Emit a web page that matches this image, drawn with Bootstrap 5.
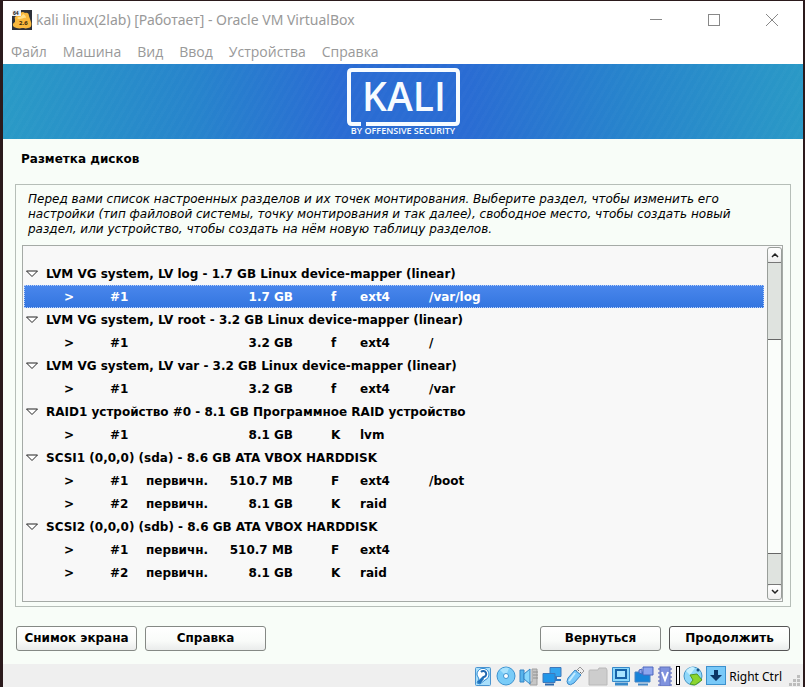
<!DOCTYPE html>
<html lang="ru">
<head>
<meta charset="utf-8">
<meta name="viewport" content="width=device-width, initial-scale=1">
<title>kali linux(2lab) [Работает] - Oracle VM VirtualBox</title>
<link href="https://cdn.jsdelivr.net/npm/bootstrap@5.3.0/dist/css/bootstrap.min.css" rel="stylesheet">
<style>
body { background: #2b1a1c; font-family: "DejaVu Sans", sans-serif; font-size: 12px; color: #000; padding: 1px 2px 0 3px; }
.vm-window { background: #f8fdf8; min-height: calc(100vh - 1px); }
.vm-chrome { background: #fff; color: #999; font-family: "Open Sans", "Noto Sans", sans-serif; }
.vm-title { height: 38px; padding: 0 2px 0 9px; }
.vm-title h1 { font-family: "Noto Sans", sans-serif; font-size: 14px; font-weight: 400; line-height: 20px; }
.win-btn { width: 58px; height: 36px; border: 0; background: none; padding: 0; }
.vm-menu { height: 25px; padding-left: 8px; gap: 16px; font-size: 14px; line-height: 26px; }
.vm-menu a { color: #999; text-decoration: none; }
.kali-banner { height: 75px; background: repeating-linear-gradient(120deg, rgba(255,255,255,.015) 0 3px, transparent 3px 7px), linear-gradient(90deg, #2a9ac6 0%, #2784cc 24%, #2a6cd3 42%, #2a6cd3 58%, #2784cc 78%, #2a99c6 100%); }
.installer { padding: 12px 12px 13px; }
.installer h2 { font-size: 12px; font-weight: 700; line-height: 16px; margin: 0 0 17px 6px; }
.question-frame { border: 1px solid #b6beb8; padding: 7px 7px 4px 6px; }
.question-frame p { font-style: italic; line-height: 15px; margin: 0 6px 8px; max-width: 720px; }
.tree-box { border: 1px solid #a5aaa6; background: #f8f8f8; height: 357px; }
.tree-view { padding: 16px 3px 0 1px; }
.part-tree { width: 100%; table-layout: fixed; font-weight: 700; border-collapse: collapse; }
.part-tree td, .part-tree th { height: 23px; padding: 0; line-height: 22px; white-space: nowrap; }
.part-tree svg { margin: 0 8px 0 2px; }
.part-tree .go { padding-left: 40px; }
.part-tree .flag { padding-left: 38px; }
.c-go { width: 86px; } .c-num { width: 36px; } .c-kind { width: 76px; } .c-size { width: 71px; } .c-flag { width: 67px; } .c-fs { width: 69px; }
.part-tree .picked { color: #fff; background: linear-gradient(#4a87ec, #3375e0); outline: 1px dotted #b9d0f8; outline-offset: -1px; }
.tree-scroll { width: 15px; background: #dfe3df; border: 1px solid #999e9a; margin: 1px 0; border-radius: 3px; }
.tree-scroll button { height: 14px; border: 0; padding: 0; background: linear-gradient(#fff, #eee); line-height: 1; display: flex; align-items: center; justify-content: center; border-radius: 3px; }
.track-up { height: 77px; border-top: 1px solid #777; }
.thumb { flex: 1; background: #fafdfa; border: 1px solid #666; border-width: 1px 0; }
.track-down { height: 31px; border-bottom: 1px solid #777; }
.actions { margin: 19px 1px 0; }
.gtk-btn { width: 121px; height: 25px; border: 1px solid #858985; border-radius: 3px; background: linear-gradient(#fff, #f9fbf9 60%, #eaeceb); font-size: 12px; font-weight: 700; line-height: 23px; padding: 0; color: #000; }
.gtk-btn.main { border-color: #555; }
.vm-status { background: #efefef; min-height: 23px; padding: 2px 2px 0 0; gap: 3px; font: 12px/22px "Noto Sans", sans-serif; overflow: hidden; }
.vm-status svg { flex: none; }
</style>
<script src="https://cdn.jsdelivr.net/npm/bootstrap@5.3.0/dist/js/bootstrap.bundle.min.js"></script>
</head>
<body>
<div class="vm-window d-flex flex-column">
<header class="vm-chrome">
  <div class="vm-title d-flex align-items-center">
    <svg width="20" height="20" viewBox="0 0 20 20" aria-hidden="true"><rect width="20" height="20" fill="#2d3038"/><path d="M3 9C2 8 3 6 5 6l3-1c0-3 3-4 5-2 2-1 4 0 4 3l2 6c1 3 0 6-3 6-2 1-5 0-6 0-3 1-6 0-8-1-2-2-1-4 1-5z" fill="#f9b83c"/><path d="M5 8c2-2 4 0 6-4 2 1 3 2 3 4-3-1-6 3-9 0z" fill="#ffe08a"/><rect width="9" height="6" fill="#eef1f5"/><text x="1" y="5" font-size="5" font-weight="700" fill="#222">64</text><text x="7" y="15" font-size="6" font-weight="700" fill="#33240a">2.6</text></svg>
    <h1 class="mb-0 ms-1 flex-grow-1 text-nowrap">kali linux(2lab) [Работает] - Oracle VM VirtualBox</h1>
    <button class="win-btn" aria-label="Свернуть"><svg width="12" height="14"><path d="M0 5.500h12" stroke="#888"/></svg></button>
    <button class="win-btn" aria-label="Развернуть"><svg width="12" height="14"><rect x=".5" y=".5" width="11" height="11" fill="none" stroke="#888"/></svg></button>
    <button class="win-btn" aria-label="Закрыть"><svg width="12" height="14"><path d="M0 0l12 12M12 0L0 12" stroke="#888"/></svg></button>
  </div>
  <nav class="vm-menu d-flex" aria-label="Меню">
    <a href="#">Файл</a><a href="#">Машина</a><a href="#">Вид</a><a href="#">Ввод</a><a href="#">Устройства</a><a href="#">Справка</a>
  </nav>
</header>
<div class="kali-banner d-flex justify-content-center">
  <svg width="118" height="75" viewBox="0 0 118 75" role="img" aria-label="KALI by Offensive Security" fill="#f6fbff" font-family="Open Sans, sans-serif"><path d="M17 60H8q-3 0-3-3V9q0-3 3-3h103q3 0 3 3v48q0 3-3 3H22" fill="none" stroke="#f6fbff" stroke-width="4"/><text x="60" y="47" font-size="39" font-weight="600" text-anchor="middle">KALI</text><text x="59" y="70" font-size="9" font-weight="600" text-anchor="middle">BY OFFENSIVE SECURITY</text></svg>
</div>
<main class="installer flex-grow-1">
  <h2>Разметка дисков</h2>
  <section class="question-frame">
    <p>Перед вами список настроенных разделов и их точек монтирования. Выберите раздел, чтобы изменить его настройки (тип файловой системы, точку монтирования и так далее), свободное место, чтобы создать новый раздел, или устройство, чтобы создать на нём новую таблицу разделов.</p>
    <div class="tree-box d-flex">
      <div class="tree-view flex-grow-1">
        <table class="part-tree">
          <colgroup><col class="c-go"><col class="c-num"><col class="c-kind"><col class="c-size"><col class="c-flag"><col class="c-fs"><col></colgroup>
          <tbody>
          <tr><th colspan="7"><svg width="12" height="8"><path d="M.5 1h11L6 6.500z" fill="#fff" stroke="#222"/></svg>LVM VG system, LV log - 1.7 GB Linux device-mapper (linear)</th></tr>
          <tr class="picked"><td class="go">&gt;</td><td>#1</td><td></td><td class="text-end">1.7 GB</td><td class="flag">f</td><td>ext4</td><td>/var/log</td></tr>
          <tr><th colspan="7"><svg width="12" height="8"><path d="M.5 1h11L6 6.500z" fill="#fff" stroke="#222"/></svg>LVM VG system, LV root - 3.2 GB Linux device-mapper (linear)</th></tr>
          <tr><td class="go">&gt;</td><td>#1</td><td></td><td class="text-end">3.2 GB</td><td class="flag">f</td><td>ext4</td><td>/</td></tr>
          <tr><th colspan="7"><svg width="12" height="8"><path d="M.5 1h11L6 6.500z" fill="#fff" stroke="#222"/></svg>LVM VG system, LV var - 3.2 GB Linux device-mapper (linear)</th></tr>
          <tr><td class="go">&gt;</td><td>#1</td><td></td><td class="text-end">3.2 GB</td><td class="flag">f</td><td>ext4</td><td>/var</td></tr>
          <tr><th colspan="7"><svg width="12" height="8"><path d="M.5 1h11L6 6.500z" fill="#fff" stroke="#222"/></svg>RAID1 устройство #0 - 8.1 GB Программное RAID устройство</th></tr>
          <tr><td class="go">&gt;</td><td>#1</td><td></td><td class="text-end">8.1 GB</td><td class="flag">K</td><td>lvm</td><td></td></tr>
          <tr><th colspan="7"><svg width="12" height="8"><path d="M.5 1h11L6 6.500z" fill="#fff" stroke="#222"/></svg>SCSI1 (0,0,0) (sda) - 8.6 GB ATA VBOX HARDDISK</th></tr>
          <tr><td class="go">&gt;</td><td>#1</td><td>первичн.</td><td class="text-end">510.7 MB</td><td class="flag">F</td><td>ext4</td><td>/boot</td></tr>
          <tr><td class="go">&gt;</td><td>#2</td><td>первичн.</td><td class="text-end">8.1 GB</td><td class="flag">K</td><td>raid</td><td></td></tr>
          <tr><th colspan="7"><svg width="12" height="8"><path d="M.5 1h11L6 6.500z" fill="#fff" stroke="#222"/></svg>SCSI2 (0,0,0) (sdb) - 8.6 GB ATA VBOX HARDDISK</th></tr>
          <tr><td class="go">&gt;</td><td>#1</td><td>первичн.</td><td class="text-end">510.7 MB</td><td class="flag">F</td><td>ext4</td><td></td></tr>
          <tr><td class="go">&gt;</td><td>#2</td><td>первичн.</td><td class="text-end">8.1 GB</td><td class="flag">K</td><td>raid</td><td></td></tr>
          </tbody>
        </table>
      </div>
      <div class="tree-scroll d-flex flex-column flex-shrink-0">
        <button aria-label="Вверх"><svg width="8" height="6"><path d="M1 5l3-3 3 3" fill="none" stroke="#222" stroke-width="1.500"/></svg></button>
        <div class="track-up"></div><div class="thumb"></div><div class="track-down"></div>
        <button aria-label="Вниз"><svg width="8" height="6"><path d="M1 1l3 3 3-3" fill="none" stroke="#222" stroke-width="1.500"/></svg></button>
      </div>
    </div>
  </section>
  <div class="actions d-flex gap-2">
    <button class="gtk-btn">Снимок экрана</button>
    <button class="gtk-btn me-auto">Справка</button>
    <button class="gtk-btn">Вернуться</button>
    <button class="gtk-btn main">Продолжить</button>
  </div>
</main>
<footer class="vm-status d-flex justify-content-end">
  <svg width="20" height="20"><rect x="2.500" y="1.500" width="15" height="18" rx="1" fill="#a9dffb" stroke="#4b94cf"/><path d="M4 9a6 6 0 1 1 8 5l-5 4-3-1 2-4z" fill="#fff" stroke="#2f8bd4"/><path d="M10 10l-6 6 3 2 4-5z" fill="#1e70bb"/><path d="M8 6a3 3 0 1 1 2 5" fill="none" stroke="#2368b0" stroke-width="2"/></svg>
  <svg width="20" height="20"><circle cx="10" cy="10" r="9" fill="#79ccf8" stroke="#3d93cf"/><path d="M4 4a9 9 0 0 1 9-2l-3 8z" fill="#a8e2fd"/><circle cx="10" cy="10" r="2.500" fill="#fff" stroke="#3d93cf"/></svg>
  <svg width="20" height="20"><path d="M13 3h5v16h-7v-3h2z" fill="#c6c6c6" stroke="#a0a0a0"/><path d="M14 6h5M14 9h5M14 12h5" stroke="#909090"/><path d="M1 4h4v12H1z" fill="#58b4ec" stroke="#3484c5"/><path d="M5 8l6-5v15l-6-5z" fill="#8bd8fc" stroke="#3484c5"/></svg>
  <svg width="20" height="20"><path d="M8 1.500h11v9H8z" fill="#35a4ee" stroke="#3f78ba"/><path d="M14 11v3h5" fill="none" stroke="#2c78c5" stroke-width="2"/><path d="M1 7.500h12v9H1z" fill="#2196e8" stroke="#3f78ba"/><path d="M3 18.500h9" stroke="#2c68ab" stroke-width="2"/></svg>
  <svg width="20" height="20"><path d="M11 5l4-4 4 4-4 4z" fill="#eee" stroke="#999"/><path d="M13 4l1 1M15 6l1 1" stroke="#666"/><path d="M10 4l6 5-7 8q-4 3-6 1t0-6z" fill="#78c8fa" stroke="#3b87c6"/><path d="M10 7l-6 8" stroke="#c6ebff" stroke-width="2"/></svg>
  <svg width="20" height="20"><path d="M1 5q0-1 1-1h8l1-2h7l1 2v15H1z" fill="#cdcdcd" stroke="#b8b8b8"/></svg>
  <svg width="20" height="20"><path d="M1.500 1.500h17v14h-17z" fill="#8bd8fc" stroke="#3789c9"/><path d="M5 4h10v8H5z" fill="#a9e5ff" stroke="#1763a8" stroke-width="2"/><path d="M4 18h13" stroke="#3789c9" stroke-width="3"/></svg>
  <svg width="20" height="20"><path d="M1 6h15v10H1z" fill="#1783d8" stroke="#4583c4"/><path d="M4 18.500h10" stroke="#4588c4" stroke-width="2"/><path d="M5 4l3-1v5L5 7zM9 1h10v8H9z" fill="#8ea6ee" stroke="#4c67bd"/></svg>
  <svg width="16" height="20"><path d="M1 3h14M1 7h14M1 11h14M1 15h14M1 19h14" stroke="#96a0d4" stroke-width="2"/><rect x="3" y="1" width="10" height="19" fill="#7f92de" stroke="#6272bb"/><path d="M5 6l3 8 3-8" fill="none" stroke="#fff" stroke-width="2"/></svg>
  <svg width="4" height="20"><rect x=".5" y=".5" width="3" height="18" fill="#fff" stroke="#000"/></svg>
  <svg width="20" height="20"><circle cx="10" cy="10" r="9" fill="#8fd8fa" stroke="#4596c8"/><path d="M3 5q5-6 9-3L7 9z" fill="#c8f0ff"/><path d="M7 9l7-1 5 6-7 5-5-1 3-4z" fill="#8ad52e" stroke="#559b22"/><circle cx="15" cy="4" r="1.500" fill="#175184"/></svg>
  <svg width="20" height="20"><rect x=".5" y=".5" width="19" height="18" fill="#79c9f8" stroke="#3c91cd"/><path d="M8 4h4v5h4l-6 6-6-6h4z" fill="#0c3568"/></svg>
  <span class="text-nowrap">Right Ctrl</span>
  <svg width="16" height="20" fill="#bdbdbd"><path d="M12 9h3v3h-3zM8 13h3v3H8zM12 13h3v3h-3zM4 17h3v3H4zM8 17h3v3H8zM12 17h3v3h-3z"/></svg>
</footer>
</div>
</body>
</html>
